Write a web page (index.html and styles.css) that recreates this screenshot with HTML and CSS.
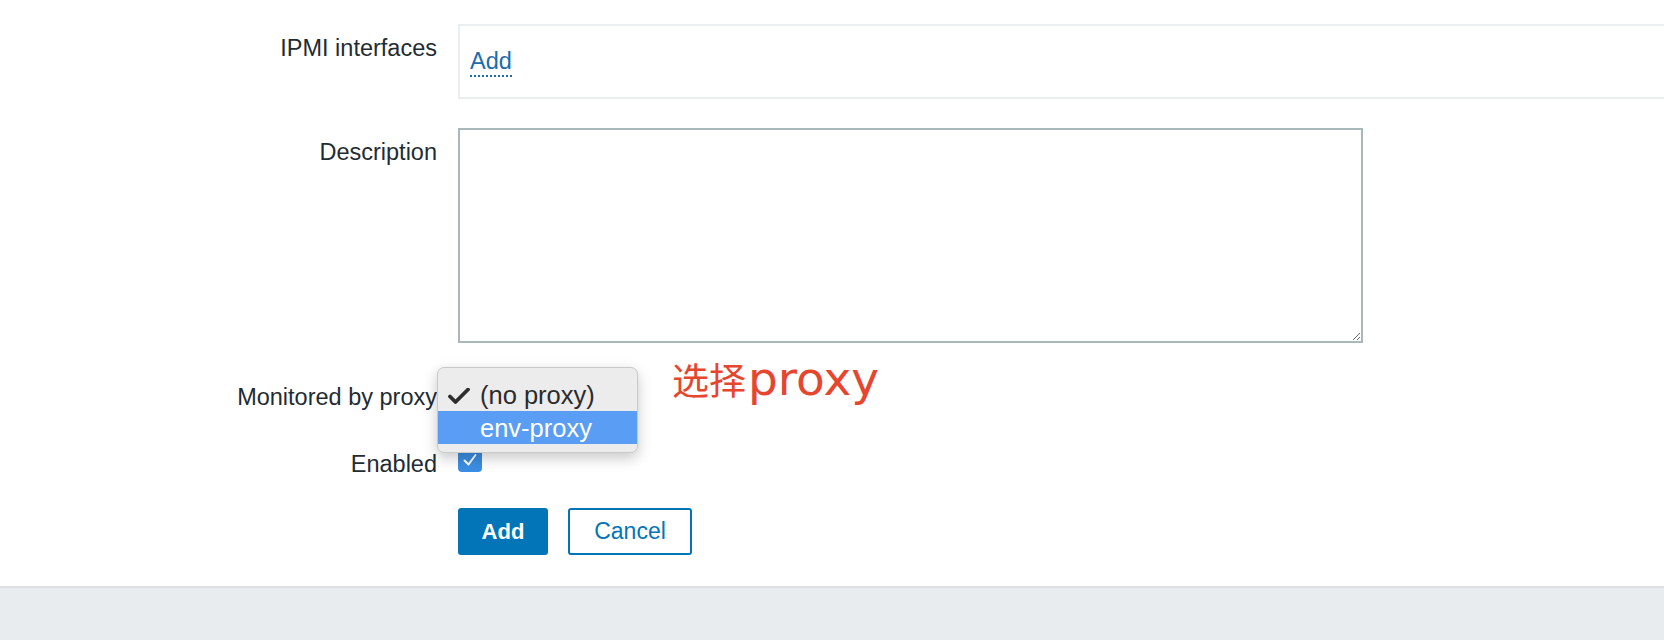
FILE: index.html
```html
<!DOCTYPE html>
<html lang="en">
<head>
<meta charset="utf-8">
<title>Host</title>
<link rel="stylesheet" href="styles.css">
</head>
<body>
<div class="page">
  <form class="form">
    <div class="row row-ipmi">
      <div class="lbl">IPMI interfaces</div>
      <div class="field">
        <div class="ipmi-box"><a class="link">Add</a></div>
      </div>
    </div>

    <div class="row row-desc">
      <div class="lbl">Description</div>
      <div class="field">
        <textarea class="desc"></textarea>
      </div>
    </div>

    <div class="row row-proxy">
      <div class="lbl">Monitored by proxy</div>
      <div class="field proxy-field">
        <div class="select-anchor">
          <div class="select"></div>
          <div class="popup">
            <div class="opt opt-checked">
              <svg class="tick" width="22" height="16" viewBox="0 0 22 16"><path d="M2 8.5 L7.5 14 L20 1.5" fill="none" stroke="#2e2e2e" stroke-width="3.8" stroke-linecap="round" stroke-linejoin="round"/></svg>
              <span>(no proxy)</span>
            </div>
            <div class="opt opt-active"><span>env-proxy</span></div>
          </div>
        </div>
        <div class="note"><span class="note-cn">选择</span><span class="note-en">proxy</span></div>
      </div>
    </div>

    <div class="row row-enabled">
      <div class="lbl">Enabled</div>
      <div class="field">
        <span class="checkbox">
          <svg width="24" height="24" viewBox="0 0 24 24"><path d="M6.5 12.5 L10.5 16.5 L17.5 7" fill="none" stroke="#ffffff" stroke-width="2" stroke-linecap="round" stroke-linejoin="round"/></svg>
        </span>
      </div>
    </div>

    <div class="row row-buttons">
      <div class="lbl"></div>
      <div class="field buttons">
        <button type="button" class="btn btn-primary">Add</button>
        <button type="button" class="btn btn-alt">Cancel</button>
      </div>
    </div>
  </form>
  <div class="footer"></div>
</div>
</body>
</html>
```

FILE: styles.css
```css
html, body {
  margin: 0;
  padding: 0;
  background: #ffffff;
  overflow: hidden;
}

.page {
  width: 1664px;
  height: 640px;
  font-family: "Liberation Sans", Arial, sans-serif;
  color: #1f2c33;
}

.form {
  display: flex;
  flex-direction: column;
  gap: 29px;
  padding: 24px 0 31px;
}

.row {
  display: grid;
  grid-template-columns: 437px 1fr;
  column-gap: 21px;
}

.lbl {
  text-align: right;
  font-size: 23.5px;
  line-height: 28px;
  padding-top: 10px;
  white-space: nowrap;
}

.field {
  min-width: 0;
}

/* IPMI */
.ipmi-box {
  border: 2px solid #ebeef0;
  border-right: none;
  padding: 21px 10px 22px;
  font-size: 23.5px;
  line-height: 28px;
  height: 28px;
}

.link {
  color: #1b6cb0;
  text-decoration: none;
  border-bottom: 2px dotted #1b6cb0;
  padding-bottom: 1px;
}

/* Description */
.desc {
  display: block;
  box-sizing: border-box;
  width: 905px;
  height: 215px;
  margin: 0;
  border: 2px solid #aab7bb;
  border-radius: 0;
  background: #fff;
  resize: both;
  outline: none;
}

/* Proxy */
.row-proxy {
  margin-top: 1px;
}

.proxy-field {
  position: relative;
  height: 38px;
}

.select-anchor {
  position: relative;
  width: 160px;
  height: 38px;
}

.select {
  height: 38px;
}

.popup {
  position: absolute;
  left: -21px;
  top: -6px;
  width: 201px;
  box-sizing: border-box;
  padding: 10px 0 8px;
  background: #ececec;
  border: 1px solid #c9c9c9;
  border-radius: 7px;
  box-shadow: 0 5px 14px rgba(0, 0, 0, 0.22);
  font-size: 25.5px;
  color: #2b2b2b;
}

.opt {
  position: relative;
  height: 33px;
  line-height: 34px;
  padding-left: 42px;
  white-space: nowrap;
}

.opt-active {
  background: #5a9df5;
  color: #ffffff;
}

.tick {
  position: absolute;
  left: 10px;
  top: 10px;
}

.note {
  position: absolute;
  left: 214px;
  top: -19px;
  color: #e6462e;
  white-space: nowrap;
  font-family: "Noto Sans CJK SC", "Noto Sans", sans-serif;
  line-height: 50px;
}

.note-cn {
  font-size: 37px;
  margin-right: 2px;
}

.note-en {
  font-family: "DejaVu Sans", "Noto Sans", sans-serif;
  font-size: 47px;
}

/* Enabled */
.row-enabled {
  height: 32px;
}

.checkbox {
  display: block;
  width: 24px;
  height: 24px;
  margin-top: 8px;
  background: #3b8ee3;
  border-radius: 4px;
}

.checkbox svg {
  display: block;
}

/* Buttons */
.row-buttons {
  margin-top: 7px;
}

.buttons {
  display: flex;
  gap: 20px;
}

.btn {
  box-sizing: border-box;
  height: 47px;
  margin: 0;
  border-radius: 3px;
  font-family: "Liberation Sans", Arial, sans-serif;
  cursor: pointer;
}

.btn-primary {
  width: 90px;
  background: #0275b8;
  border: 2px solid #0275b8;
  color: #ffffff;
  font-weight: bold;
  font-size: 22px;
}

.btn-alt {
  width: 124px;
  background: #ffffff;
  border: 2px solid #0275b8;
  color: #0275b8;
  font-size: 23px;
}

/* Footer */
.footer {
  height: 52px;
  border-top: 2px solid #dde0e3;
  background: #e8ecef;
}
```
